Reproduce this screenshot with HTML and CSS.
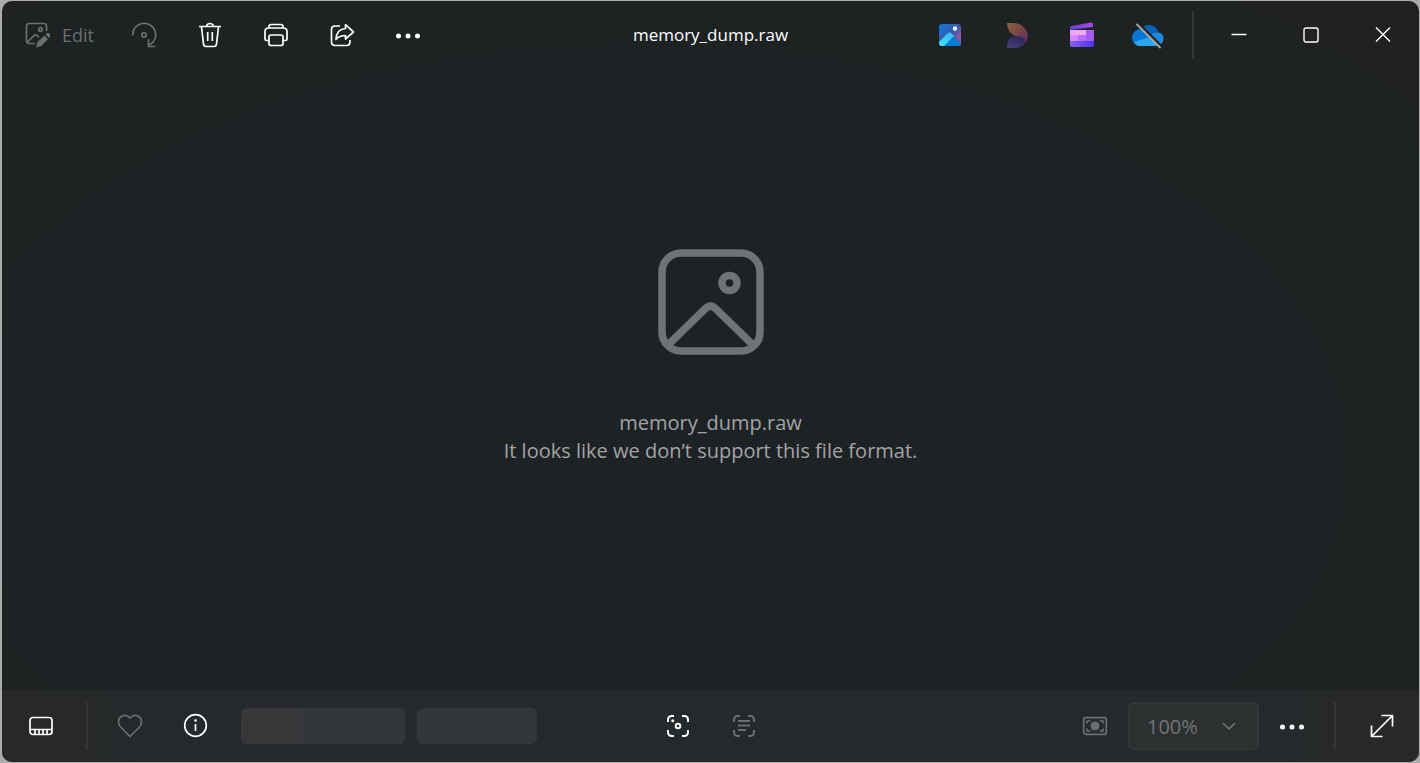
FILE: index.html
```html
<!DOCTYPE html>
<html lang="en">
<head>
<meta charset="utf-8">
<title>memory_dump.raw</title>
<link rel="stylesheet" href="styles.css">
</head>
<body>
<div class="window">
  <header class="titlebar">
    <div class="group tools">
      <button class="edit" disabled>
        <svg class="icon" viewBox="0 0 26 26"><path d="M11 21.500H5a2.500 2.500 0 0 1-2.500-2.500V4A2.500 2.500 0 0 1 5 1.500h15A2.500 2.500 0 0 1 22.500 4v5M3 20.500l7-7q1.500-1.300 3 0l2 2"/><circle cx="16.500" cy="7.500" r="1.800"/><path class="solid" d="M12 25.500l1.500-5.500 7-6.500 3.500 3.500-6.500 7zM21.500 12.500q2.500-2.700 4.500-.500t-1 4z"/></svg>
        <span>Edit</span>
      </button>
      <button class="tool" aria-label="Rotate" disabled><svg class="icon" viewBox="0 0 26 26"><path d="M1.700 13.500A11.500 11.500 0 1 1 18.500 23M17.500 17v7.500h7"/><circle cx="13" cy="13" r="2.200"/></svg></button>
      <button class="tool" aria-label="Delete"><svg class="icon" viewBox="0 0 26 26"><path d="M2 4.500h22M4.500 5l2 17q.300 2.500 2.500 2.500h8q2.200 0 2.500-2.500l2-17M9.500 4.500a3.500 3 0 0 1 7 0M10.700 10v9M15.300 10v9"/></svg></button>
      <button class="tool" aria-label="Print"><svg class="icon" viewBox="0 0 26 26"><path d="M6 6V4.500q0-2 2.500-2h9q2.500 0 2.500 2V6M6 18.500H3.500Q2 18.500 2 17V9.500Q2 6 5.500 6h15Q24 6 24 9.500V17q0 1.500-1.500 1.500H20"/><rect x="6" y="13" width="14" height="10.500" rx="2"/></svg></button>
      <button class="tool" aria-label="Share"><svg class="icon" viewBox="0 0 26 26"><path d="M11 4H6Q2.500 4 2.500 7.500v12Q2.500 23.500 6 23.500h11.500q3.500 0 3.500-4V18M16.500 6.500V2.700L24.500 10l-8 7v-3.500q-6 0-9.500 4Q7.500 7 16.500 6.500z"/></svg></button>
      <button class="tool" aria-label="More"><svg class="icon dots" viewBox="0 0 26 26"><circle cx="3.500" cy="14" r="2.500"/><circle cx="13" cy="14" r="2.500"/><circle cx="22.500" cy="14" r="2.500"/></svg></button>
    </div>
    <h1 class="title">memory_dump.raw</h1>
    <div class="group apps">
      <button class="tool" aria-label="Photos">
        <svg class="app" viewBox="0 0 32 32"><defs><linearGradient id="photo" x1="0" y1="0" x2="1" y2="1"><stop offset="0" stop-color="#0f79d8"/><stop offset=".5" stop-color="#355bae"/><stop offset=".75" stop-color="#95569f"/></linearGradient><linearGradient id="hill" x1="1" y1="0" x2="0" y2="1"><stop stop-color="#35b7f5"/><stop offset="1" stop-color="#47e1fb"/></linearGradient><clipPath id="tile"><rect x="5" y="5" width="22" height="22" rx="3"/></clipPath></defs><g clip-path="url(#tile)"><path fill="url(#photo)" d="M5 5h22v22H5z"/><path fill="#0b7bd0" d="M8 28l11-12 10 10v3H8z"/><path fill="url(#hill)" d="M4 24l9.500-9.500q2-2 4 0l2.500 2.500L9 28H4z"/></g><circle cx="21" cy="9.500" r="2.200" fill="#eef2fb"/></svg>
      </button>
      <button class="tool" aria-label="Designer">
        <svg class="app" viewBox="0 0 32 32"><defs><linearGradient id="warm" x1="0" y1="0" x2="1" y2="1"><stop stop-color="#8a6139"/><stop offset=".55" stop-color="#75404d"/><stop offset="1" stop-color="#5b2c73"/></linearGradient><linearGradient id="cool" x1="0" y1="1" x2="1" y2="0"><stop stop-color="#45417d"/><stop offset="1" stop-color="#282350"/></linearGradient></defs><path fill="url(#warm)" d="M7 4h6q7 0 11.500 5 3.500 3.500 3.500 8-1 6-5 9l-8-9Q7 13 7 4z"/><path fill="url(#cool)" d="M7 29v-3q1-9 10-9 7.500 0 8 4.500Q24 29 14 29z"/></svg>
      </button>
      <button class="tool" aria-label="Clipchamp">
        <svg class="app" viewBox="0 0 32 32"><defs><linearGradient id="clip" x1="0" x2="1"><stop stop-color="#6440db"/><stop offset="1" stop-color="#a24be0"/></linearGradient><linearGradient id="base" x1="0" x2="1"><stop stop-color="#895ff5"/><stop offset="1" stop-color="#4b35ed"/></linearGradient></defs><path fill="url(#clip)" d="M4 9q0-1.500 1.500-2L25 3.500q2-.300 2 1.500v3L4 11z"/><path fill="#c97cf0" d="M4 11h24v5H4z"/><path fill="#efa9f8" d="M4 11h16v5H4z"/><path fill="#a55cf1" d="M12 16h16v6H12zM20 11h8v5h-8z"/><path fill="#d58bf7" d="M4 16h8v6H4z"/><path fill="#b66ff5" d="M12 16h8v6h-8z"/><path fill="url(#base)" d="M4 22h24v4q0 2-2 2H6q-2 0-2-2z"/></svg>
      </button>
      <button class="tool" aria-label="OneDrive">
        <svg class="app" viewBox="0 0 32 32"><path fill="#0563ba" d="M9 10q3-4 8-4 7 0 9 7l-8 7z"/><path fill="#0877d4" d="M0 19q0-6 5-8 7-3 12 3l3 3-15 9Q0 24 0 19z"/><path fill="#198be0" d="M20 15q9-4 11.500 3 .500 5-3.500 8l-11-6z"/><path fill="#28a8ea" d="M2 23l16-5 11 6q-2 3-5 3H7q-3 0-5-4z"/><path fill="none" stroke="#202223" stroke-width="3" d="M7 5l22 22"/><path fill="none" stroke="#aaa" stroke-width="1.800" stroke-linecap="round" d="M5 5.500l23 23"/></svg>
      </button>
      <span class="divider"></span>
      <button class="caption" aria-label="Minimize"><svg class="small" viewBox="0 0 16 16"><path d="M.500 7.500h15"/></svg></button>
      <button class="caption" aria-label="Maximize"><svg class="small" viewBox="0 0 16 16"><rect x="1" y="1" width="14" height="14" rx="2"/></svg></button>
      <button class="caption" aria-label="Close"><svg class="small" viewBox="0 0 16 16"><path d="M1 .500l14 14M15 .500L1 14.500"/></svg></button>
    </div>
  </header>
  <main class="viewer">
    <svg class="placeholder" viewBox="0 0 106 106"><rect x="4" y="4" width="98" height="98" rx="19"/><path d="M11 95l36-35q5.500-5.500 11 0l36 35"/><circle cx="71.500" cy="34" r="7.500"/></svg>
    <p class="message">memory_dump.raw<br>It looks like we don’t support this file format.</p>
  </main>
  <footer class="statusbar">
    <div class="group">
      <button class="film" aria-label="Filmstrip"><svg class="icon" viewBox="0 0 26 26"><rect x="2" y="4.500" width="22" height="17" rx="3"/><path d="M2 16.500h22M7 17v4M11 17v4M15 17v4M19 17v4"/></svg></button>
      <span class="divider"></span>
      <button class="tool like" aria-label="Favorite" disabled><svg class="icon" viewBox="0 0 26 26"><path d="M13 5C8-.500 1.500 3.500 1.500 9q0 3 2.500 5.500L13 23.500l9-9Q24.500 12 24.500 9C24.500 3.500 18-.500 13 5z"/></svg></button>
      <button class="tool" aria-label="File info"><svg class="icon" viewBox="0 0 26 26"><circle cx="12.500" cy="12.500" r="10.800"/><path d="M12.500 11v7"/><circle class="solid" cx="12.500" cy="7.500" r="1.300"/></svg></button>
      <div class="chips"><span class="chip wide"></span><span class="chip"></span></div>
    </div>
    <div class="group">
      <button class="tool" aria-label="Visual search"><svg class="icon" viewBox="0 0 26 26"><path class="thick" d="M3 9V7q0-4 4-4h2M17 3h2q4 0 4 4v2M23 17v2q0 4-4 4h-2M9 23H7q-4 0-4-4v-2"/><circle class="thick" cx="13" cy="13" r="2.300"/><circle class="solid" cx="7.800" cy="7.800" r="1.500"/></svg></button>
      <button class="tool" aria-label="Scan text" disabled><svg class="icon" viewBox="0 0 26 26"><path class="thick" d="M3 9V7q0-4 4-4h2M17 3h2q4 0 4 4v2M23 17v2q0 4-4 4h-2M9 23H7q-4 0-4-4v-2M7 8h12M7 12.500h12M7 17h8"/></svg></button>
    </div>
    <div class="group zoom">
      <button class="tool" aria-label="Zoom to fit" disabled><svg class="icon" viewBox="0 0 26 26"><rect x="1.700" y="4.700" width="22.600" height="16.600" rx="2"/><path d="M5 10.500V8h3.500M17.500 8H21v2.500M21 15.500V18h-3.500M8.500 18H5v-2.500"/><circle class="solid" cx="13" cy="13" r="4.500"/></svg></button>
      <div class="level">
        <select aria-label="Zoom level" disabled><option>100%</option></select>
        <svg class="chevron" viewBox="0 0 14 14"><path d="M1 4l6 6 6-6"/></svg>
      </div>
      <button class="tool" aria-label="More options"><svg class="icon dots" viewBox="0 0 26 26"><circle cx="3.500" cy="14" r="2.500"/><circle cx="13" cy="14" r="2.500"/><circle cx="22.500" cy="14" r="2.500"/></svg></button>
      <span class="divider gap"></span>
      <button class="full" aria-label="Full screen"><svg class="icon" viewBox="0 0 26 26"><path d="M3 23L23 3M12.500 2.500h11v11M2.500 12.500v11h11"/></svg></button>
    </div>
  </footer>
</div>
</body>
</html>
```
FILE: styles.css
```css
* { box-sizing: border-box; }

body {
  margin: 0;
  padding: 1px 1px 1px 2px;
  min-height: 100vh;
  display: flex;
  background: #aaacac;
  color: #fff;
  font-family: "Open Sans", "Noto Sans", sans-serif;
}

.window {
  flex: 1;
  display: flex;
  flex-direction: column;
  border-radius: 10px;
  overflow: hidden;
  background: radial-gradient(ellipse at 45% 60%, #1d2225 50%, #1e2222 75%, #202122 100%);
}

button {
  display: flex;
  align-items: center;
  justify-content: center;
  height: 48px;
  padding: 0;
  border: 0;
  background: none;
  color: #fff;
  font: inherit;
}

button:disabled { color: #6c6e6f; }

svg {
  flex: none;
  fill: none;
  stroke: currentColor;
  stroke-width: 1.7;
  stroke-linejoin: round;
}

.icon { width: 26px; height: 26px; }
.app { width: 32px; height: 32px; stroke: none; }
.small { width: 16px; height: 16px; stroke-width: 1.4; }
.solid, .dots { fill: currentColor; stroke: none; }
.thick { stroke-width: 2; }

.titlebar, .statusbar {
  display: grid;
  grid-template-columns: 1fr auto 1fr;
  align-items: center;
}

.titlebar { height: 68px; }
.group { display: flex; align-items: center; }
.tools { padding-left: 22px; }
.tool { width: 66px; }
.apps, .zoom { justify-content: flex-end; }

.edit {
  width: 87px;
  gap: 12px;
  justify-content: flex-start;
  font-size: 18px;
}

.title {
  margin: 0;
  font-size: 17px;
  font-weight: 400;
  line-height: 24px;
}

.divider {
  width: 2px;
  height: 48px;
  background: #353637;
}

.apps .divider { margin: 0 9px 0 11px; }
.caption { width: 72px; }

.viewer {
  flex: 1;
  display: flex;
  flex-direction: column;
  align-items: center;
  justify-content: center;
  gap: 54px;
  padding-bottom: 46px;
}

.placeholder {
  width: 106px;
  height: 106px;
  color: #6f7375;
  stroke-width: 7.500;
}

.message {
  margin: 0;
  color: #a2a4a5;
  font-size: 20px;
  line-height: 28px;
  text-align: center;
}

.statusbar {
  height: 72px;
  background: linear-gradient(90deg, #282829, #25292b 12%, #25292b 88%, #282829);
}

.film { width: 78px; }
.film + .divider { margin-left: 6px; }
.like { margin-left: 9px; }

.chips {
  display: flex;
  gap: 12px;
  margin-left: 12px;
}

.chip {
  width: 120px;
  height: 36px;
  border-radius: 6px;
  background: #333739;
}

.chip.wide {
  width: 164px;
  background: linear-gradient(90deg, #37373a 30%, #333739 45%);
}

.level { position: relative; }

select {
  width: 131px;
  height: 48px;
  padding: 0 17px;
  border: 2px solid #343738;
  border-radius: 6px;
  appearance: none;
  background: #2d3031;
  color: #737576;
  font: inherit;
  font-size: 20px;
  opacity: 1;
}

.chevron {
  position: absolute;
  top: 17px;
  right: 23px;
  width: 14px;
  height: 14px;
  color: #737576;
}

.gap { margin: 0 9px; }
.full { width: 74px; }
```
